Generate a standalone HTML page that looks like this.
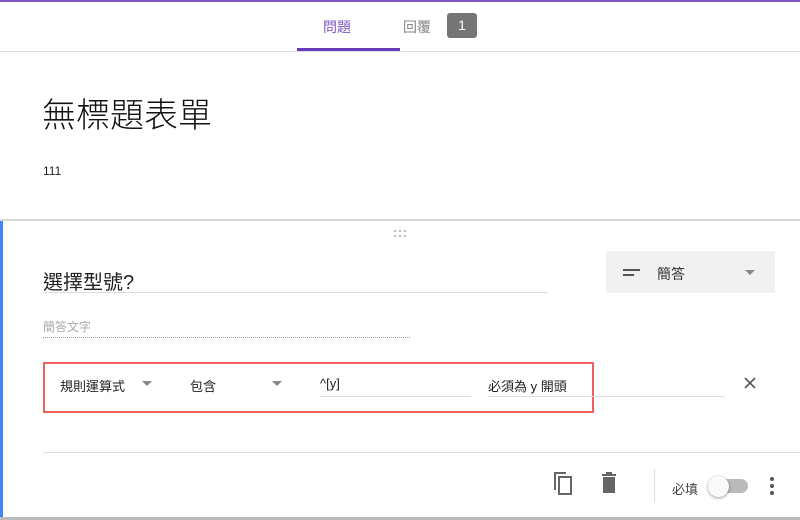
<!DOCTYPE html>
<html><head><meta charset="utf-8"><style>
*{margin:0;padding:0;box-sizing:border-box}
body{width:800px;height:520px;overflow:hidden;background:#fff;font-family:"Liberation Sans","Noto Sans CJK TC",sans-serif;position:relative;color:#212121}
.a{position:absolute}
.tri{position:absolute;width:0;height:0;border-left:5px solid transparent;border-right:5px solid transparent;border-top:5px solid #888}
.d{position:absolute;width:2px;height:2px;border-radius:50%;background:#aaa}
</style></head><body>
<div class="a" style="left:0;top:0;width:800px;height:2px;background:#7e57c2"></div>
<div class="a" style="left:323px;top:17px;font-size:14px;color:#7e57c2">問題</div>
<div class="a" style="left:297px;top:48px;width:103px;height:3px;background:#673ab7"></div>
<div class="a" style="left:403px;top:17px;font-size:14px;color:#888">回覆</div>
<div class="a" style="left:447px;top:13px;width:30px;height:25px;background:#757575;border-radius:3px;color:#fff;font-size:14px;text-align:center;line-height:25px">1</div>
<div class="a" style="left:0;top:51px;width:800px;height:1px;background:#ddd"></div>
<div class="a" style="left:42px;top:88px;font-size:34px;font-weight:300;color:#111">無標題表單</div>
<div class="a" style="left:43px;top:164px;font-size:12px;color:#222">111</div>
<div class="a" style="left:0;top:219px;width:800px;height:2px;background:#d8d8d8"></div>
<div class="a" style="left:0;top:221px;width:3px;height:299px;background:#4285f4"></div>
<div class="a" style="left:0;top:517px;width:800px;height:3px;background:#bbb"></div>
<div class="d" style="left:394px;top:230px"></div><div class="d" style="left:399px;top:230px"></div><div class="d" style="left:404px;top:230px"></div>
<div class="d" style="left:394px;top:235px"></div><div class="d" style="left:399px;top:235px"></div><div class="d" style="left:404px;top:235px"></div>
<div class="a" style="left:43px;top:266px;font-size:20px;color:#222">選擇型號?</div>
<div class="a" style="left:43px;top:292px;width:505px;height:1px;background:#ddd"></div>
<div class="a" style="left:606px;top:251px;width:169px;height:42px;background:#f1f1f1;border-radius:2px"></div>
<div class="a" style="left:623px;top:269px;width:17px;height:2px;background:#555"></div>
<div class="a" style="left:623px;top:274px;width:11px;height:2px;background:#555"></div>
<div class="a" style="left:657px;top:264px;font-size:14px;color:#333">簡答</div>
<div class="tri" style="left:745px;top:270px"></div>
<div class="a" style="left:43px;top:318px;font-size:12px;color:#aaa">簡答文字</div>
<div class="a" style="left:43px;top:337px;width:367px;border-top:1px dotted #999"></div>
<div class="a" style="left:43px;top:362px;width:551px;height:51px;border:2px solid #f06262"></div>
<div class="a" style="left:60px;top:376px;font-size:13px;color:#222">規則運算式</div>
<div class="tri" style="left:142px;top:381px"></div>
<div class="a" style="left:190px;top:376px;font-size:13px;color:#222">包含</div>
<div class="tri" style="left:272px;top:381px"></div>
<div class="a" style="left:320px;top:376px;font-size:13px;color:#222">^[y]</div>
<div class="a" style="left:320px;top:396px;width:151px;height:1px;background:#ddd"></div>
<div class="a" style="left:488px;top:376px;font-size:13px;color:#222">必須為 y 開頭</div>
<div class="a" style="left:488px;top:396px;width:237px;height:1px;background:#ddd"></div>
<svg class="a" style="left:743px;top:376px" width="14" height="14"><path d="M2 2L12 12M12 2L2 12" stroke="#555" stroke-width="1.6"/></svg>
<div class="a" style="left:43px;top:452px;width:757px;height:1px;background:#ddd"></div>
<svg class="a" style="left:551px;top:470px" width="24" height="26"><path d="M3 2h12v2H5v16H3z" fill="#666"/><rect x="8" y="7" width="12" height="17" fill="none" stroke="#666" stroke-width="2"/></svg>
<svg class="a" style="left:602px;top:472px" width="22" height="22"><rect x="0" y="2" width="14" height="2" fill="#666"/><rect x="4" y="0" width="6" height="3" fill="#666"/><rect x="1" y="5" width="12" height="16" fill="#666"/></svg>
<div class="a" style="left:654px;top:469px;width:1px;height:33px;background:#ddd"></div>
<div class="a" style="left:672px;top:479px;font-size:13px;color:#444">必填</div>
<div class="a" style="left:714px;top:479px;width:34px;height:14px;border-radius:7px;background:#bbb"></div>
<div class="a" style="left:708px;top:476px;width:21px;height:21px;border-radius:50%;background:#fafafa;box-shadow:0 1px 3px rgba(0,0,0,.4)"></div>
<div class="a" style="left:770px;top:477px;width:4px;height:4px;border-radius:50%;background:#555"></div>
<div class="a" style="left:770px;top:484px;width:4px;height:4px;border-radius:50%;background:#555"></div>
<div class="a" style="left:770px;top:491px;width:4px;height:4px;border-radius:50%;background:#555"></div>
</body></html>
